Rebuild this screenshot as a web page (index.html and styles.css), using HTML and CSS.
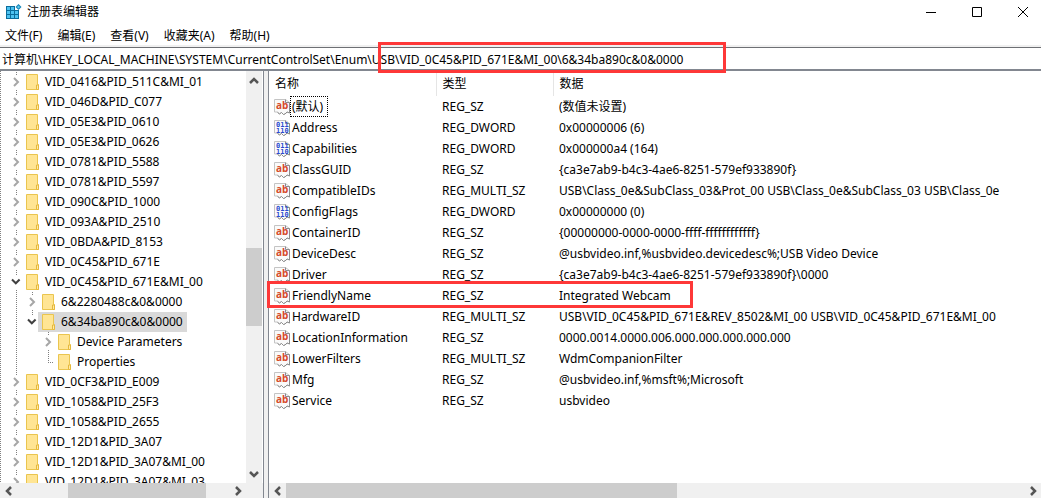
FILE: index.html
```html
<!DOCTYPE html>
<html lang="zh-CN">
<head>
    <meta charset="utf-8">
    <title>注册表编辑器</title>
    <link rel="stylesheet" href="styles.css">
</head>
<body>
    <svg class="symbols" aria-hidden="true">
        <symbol id="right" viewBox="0 0 14 14"><path d="M6 3l4 4-4 4" fill="none" stroke="#a6a6a6" stroke-width="2"/></symbol>
        <symbol id="down" viewBox="0 0 14 14"><path d="M4 4.500l3.800 3.800 3.800-3.800" fill="none" stroke="#404040" stroke-width="2"/></symbol>
        <symbol id="folder" viewBox="0 0 13 16">
            <path d="M.5.5h11v10h1v5H.5z" fill="#ffe594" stroke="#eac54f"/>
            <path d="M10.500 15.500v-4.500h2v4.500z" fill="#ffeaa6" stroke="#e6b93c"/>
        </symbol>
        <symbol id="page" viewBox="0 0 16 16">
            <path d="M.5.5h11l4 3v10.500l-2-1-2 1.500-2 1-2-2-2 1-2-1.500H.5z" fill="#fafafa" stroke="#c4c4c4"/>
            <path d="M11.500.500v3h4v10.500l-2.500-1-2 2-1.500.500-2-2-2 1.500-2-1.500" fill="none" stroke="#8c8c8c"/>
        </symbol>
        <symbol id="arrow" viewBox="0 0 16 16"><path d="M6 4l4 4-4 4" fill="none" stroke="#555" stroke-width="2.500"/></symbol>
    </svg>

    <div class="window">
        <header class="titlebar">
            <svg class="app-icon" viewBox="0 0 16 16" aria-hidden="true">
                <path d="M0 2h10v4h3v9H0z" fill="#0b6d9c"/>
                <path d="M1 3h3v3H1zM5 3h3v3H5zM1 7h3v3H1zM5 7h3v3H5zM9 7h3v3H9zM1 11h3v3H1zM5 11h3v3H5zM9 11h3v3H9z" fill="#4cc2f1"/>
                <path d="M9 1h4v5H9z" fill="#fff"/>
                <path d="M12.500 0L15.500 3l-3 3-3-3z" fill="#1686b8"/>
                <path d="M12.500 1.500L14 3l-1.500 1.500L11 3z" fill="#62c9ee"/>
            </svg>
            <h1>注册表编辑器</h1>
            <div class="controls">
                <button aria-label="最小化"><svg viewBox="0 0 10 10"><path d="M0 5.500h10"/></svg></button>
                <button aria-label="最大化"><svg viewBox="0 0 10 10"><path d="M.5.5h9v9h-9z"/></svg></button>
                <button aria-label="关闭"><svg viewBox="0 0 10 10"><path d="M0 0l10 10M10 0L0 10"/></svg></button>
            </div>
        </header>

        <nav class="menu">
            <button>文件(F)</button>
            <button>编辑(E)</button>
            <button>查看(V)</button>
            <button>收藏夹(A)</button>
            <button>帮助(H)</button>
        </nav>

        <div class="address">
            <input type="text" aria-label="路径" value="计算机\HKEY_LOCAL_MACHINE\SYSTEM\CurrentControlSet\Enum\USB\VID_0C45&amp;PID_671E&amp;MI_00\6&amp;34ba890c&amp;0&amp;0000">
            <div class="mark mark-path"></div>
        </div>

        <main class="panes">
            <section class="pane tree-pane">
                <div class="view">
                    <ul class="tree">
                        <li><div class="row"><svg class="toggle"><use href="#right"/></svg><span class="key"><svg class="folder"><use href="#folder"/></svg>VID_0416&amp;PID_511C&amp;MI_01</span></div></li>
                        <li><div class="row"><svg class="toggle"><use href="#right"/></svg><span class="key"><svg class="folder"><use href="#folder"/></svg>VID_046D&amp;PID_C077</span></div></li>
                        <li><div class="row"><svg class="toggle"><use href="#right"/></svg><span class="key"><svg class="folder"><use href="#folder"/></svg>VID_05E3&amp;PID_0610</span></div></li>
                        <li><div class="row"><svg class="toggle"><use href="#right"/></svg><span class="key"><svg class="folder"><use href="#folder"/></svg>VID_05E3&amp;PID_0626</span></div></li>
                        <li><div class="row"><svg class="toggle"><use href="#right"/></svg><span class="key"><svg class="folder"><use href="#folder"/></svg>VID_0781&amp;PID_5588</span></div></li>
                        <li><div class="row"><svg class="toggle"><use href="#right"/></svg><span class="key"><svg class="folder"><use href="#folder"/></svg>VID_0781&amp;PID_5597</span></div></li>
                        <li><div class="row"><svg class="toggle"><use href="#right"/></svg><span class="key"><svg class="folder"><use href="#folder"/></svg>VID_090C&amp;PID_1000</span></div></li>
                        <li><div class="row"><svg class="toggle"><use href="#right"/></svg><span class="key"><svg class="folder"><use href="#folder"/></svg>VID_093A&amp;PID_2510</span></div></li>
                        <li><div class="row"><svg class="toggle"><use href="#right"/></svg><span class="key"><svg class="folder"><use href="#folder"/></svg>VID_0BDA&amp;PID_8153</span></div></li>
                        <li><div class="row"><svg class="toggle"><use href="#right"/></svg><span class="key"><svg class="folder"><use href="#folder"/></svg>VID_0C45&amp;PID_671E</span></div></li>
                        <li>
                            <div class="row"><svg class="toggle"><use href="#down"/></svg><span class="key"><svg class="folder"><use href="#folder"/></svg>VID_0C45&amp;PID_671E&amp;MI_00</span></div>
                            <ul>
                                <li><div class="row"><svg class="toggle"><use href="#right"/></svg><span class="key"><svg class="folder"><use href="#folder"/></svg>6&amp;2280488c&amp;0&amp;0000</span></div></li>
                                <li>
                                    <div class="row"><svg class="toggle"><use href="#down"/></svg><span class="key selected"><svg class="folder"><use href="#folder"/></svg>6&amp;34ba890c&amp;0&amp;0000</span></div>
                                    <ul>
                                        <li><div class="row"><svg class="toggle"><use href="#right"/></svg><span class="key"><svg class="folder"><use href="#folder"/></svg>Device Parameters</span></div></li>
                                        <li><div class="row"><span class="leaf"></span><span class="key"><svg class="folder"><use href="#folder"/></svg>Properties</span></div></li>
                                    </ul>
                                </li>
                            </ul>
                        </li>
                        <li><div class="row"><svg class="toggle"><use href="#right"/></svg><span class="key"><svg class="folder"><use href="#folder"/></svg>VID_0CF3&amp;PID_E009</span></div></li>
                        <li><div class="row"><svg class="toggle"><use href="#right"/></svg><span class="key"><svg class="folder"><use href="#folder"/></svg>VID_1058&amp;PID_25F3</span></div></li>
                        <li><div class="row"><svg class="toggle"><use href="#right"/></svg><span class="key"><svg class="folder"><use href="#folder"/></svg>VID_1058&amp;PID_2655</span></div></li>
                        <li><div class="row"><svg class="toggle"><use href="#right"/></svg><span class="key"><svg class="folder"><use href="#folder"/></svg>VID_12D1&amp;PID_3A07</span></div></li>
                        <li><div class="row"><svg class="toggle"><use href="#right"/></svg><span class="key"><svg class="folder"><use href="#folder"/></svg>VID_12D1&amp;PID_3A07&amp;MI_00</span></div></li>
                        <li><div class="row"><svg class="toggle"><use href="#right"/></svg><span class="key"><svg class="folder"><use href="#folder"/></svg>VID_12D1&amp;PID_3A07&amp;MI_03</span></div></li>
                    </ul>
                    <div class="scroll vertical">
                        <button aria-label="向上"><svg class="up"><use href="#arrow"/></svg></button>
                        <div class="track"><div class="thumb"></div></div>
                        <button aria-label="向下"><svg class="down"><use href="#arrow"/></svg></button>
                    </div>
                </div>
                <div class="scroll tree-scroll">
                    <button aria-label="向左"><svg class="left"><use href="#arrow"/></svg></button>
                    <div class="track"><div class="thumb"></div></div>
                    <button aria-label="向右"><svg><use href="#arrow"/></svg></button>
                </div>
            </section>

            <section class="pane values-pane">
                <div class="view">
                    <table class="values">
                        <thead>
                            <tr><th class="col-name">名称</th><th class="col-type">类型</th><th>数据</th></tr>
                        </thead>
                        <tbody>
                            <tr><td><svg class="icon"><use href="#page"/><text x="2" y="10" class="glyph-ab">ab</text></svg><span class="name focused">(默认)</span></td><td>REG_SZ</td><td>(数值未设置)</td></tr>
                            <tr><td><svg class="icon"><use href="#page"/><text x="2" y="7" class="glyph-bits">011</text><text x="2" y="13" class="glyph-bits">110</text></svg><span class="name">Address</span></td><td>REG_DWORD</td><td>0x00000006 (6)</td></tr>
                            <tr><td><svg class="icon"><use href="#page"/><text x="2" y="7" class="glyph-bits">011</text><text x="2" y="13" class="glyph-bits">110</text></svg><span class="name">Capabilities</span></td><td>REG_DWORD</td><td>0x000000a4 (164)</td></tr>
                            <tr><td><svg class="icon"><use href="#page"/><text x="2" y="10" class="glyph-ab">ab</text></svg><span class="name">ClassGUID</span></td><td>REG_SZ</td><td>{ca3e7ab9-b4c3-4ae6-8251-579ef933890f}</td></tr>
                            <tr><td><svg class="icon"><use href="#page"/><text x="2" y="10" class="glyph-ab">ab</text></svg><span class="name">CompatibleIDs</span></td><td>REG_MULTI_SZ</td><td>USB\Class_0e&amp;SubClass_03&amp;Prot_00 USB\Class_0e&amp;SubClass_03 USB\Class_0e</td></tr>
                            <tr><td><svg class="icon"><use href="#page"/><text x="2" y="7" class="glyph-bits">011</text><text x="2" y="13" class="glyph-bits">110</text></svg><span class="name">ConfigFlags</span></td><td>REG_DWORD</td><td>0x00000000 (0)</td></tr>
                            <tr><td><svg class="icon"><use href="#page"/><text x="2" y="10" class="glyph-ab">ab</text></svg><span class="name">ContainerID</span></td><td>REG_SZ</td><td>{00000000-0000-0000-ffff-ffffffffffff}</td></tr>
                            <tr><td><svg class="icon"><use href="#page"/><text x="2" y="10" class="glyph-ab">ab</text></svg><span class="name">DeviceDesc</span></td><td>REG_SZ</td><td>@usbvideo.inf,%usbvideo.devicedesc%;USB Video Device</td></tr>
                            <tr><td><svg class="icon"><use href="#page"/><text x="2" y="10" class="glyph-ab">ab</text></svg><span class="name">Driver</span></td><td>REG_SZ</td><td>{ca3e7ab9-b4c3-4ae6-8251-579ef933890f}\0000</td></tr>
                            <tr class="marked"><td><svg class="icon"><use href="#page"/><text x="2" y="10" class="glyph-ab">ab</text></svg><span class="name">FriendlyName</span><div class="mark mark-row"></div></td><td>REG_SZ</td><td>Integrated Webcam</td></tr>
                            <tr><td><svg class="icon"><use href="#page"/><text x="2" y="10" class="glyph-ab">ab</text></svg><span class="name">HardwareID</span></td><td>REG_MULTI_SZ</td><td>USB\VID_0C45&amp;PID_671E&amp;REV_8502&amp;MI_00 USB\VID_0C45&amp;PID_671E&amp;MI_00</td></tr>
                            <tr><td><svg class="icon"><use href="#page"/><text x="2" y="10" class="glyph-ab">ab</text></svg><span class="name">LocationInformation</span></td><td>REG_SZ</td><td>0000.0014.0000.006.000.000.000.000.000</td></tr>
                            <tr><td><svg class="icon"><use href="#page"/><text x="2" y="10" class="glyph-ab">ab</text></svg><span class="name">LowerFilters</span></td><td>REG_MULTI_SZ</td><td>WdmCompanionFilter</td></tr>
                            <tr><td><svg class="icon"><use href="#page"/><text x="2" y="10" class="glyph-ab">ab</text></svg><span class="name">Mfg</span></td><td>REG_SZ</td><td>@usbvideo.inf,%msft%;Microsoft</td></tr>
                            <tr><td><svg class="icon"><use href="#page"/><text x="2" y="10" class="glyph-ab">ab</text></svg><span class="name">Service</span></td><td>REG_SZ</td><td>usbvideo</td></tr>
                        </tbody>
                    </table>
                </div>
                <div class="scroll values-scroll">
                    <button aria-label="向左"><svg class="left"><use href="#arrow"/></svg></button>
                    <div class="track"><div class="thumb"></div></div>
                    <button aria-label="向右"><svg><use href="#arrow"/></svg></button>
                </div>
            </section>
        </main>
    </div>
</body>
</html>
```
FILE: styles.css
```css
* {
    box-sizing: border-box;
}

body {
    margin: 0;
    font-family: "Noto Sans", "Noto Sans CJK SC", sans-serif;
    font-size: 12px;
    line-height: 20px;
    color: #000;
    background: #fff;
}

button,
input {
    font: inherit;
    color: inherit;
    border: none;
    padding: 0;
    margin: 0;
    background: none;
}

svg {
    display: block;
    flex: none;
}

ul {
    list-style: none;
    margin: 0;
    padding: 0;
}

.symbols {
    position: absolute;
    width: 0;
    height: 0;
}

.window {
    display: flex;
    flex-direction: column;
    height: 100vh;
    overflow: hidden;
}

/* title bar and menu */
.titlebar {
    display: flex;
    align-items: center;
    flex: none;
    height: 24px;
    padding-left: 6px;
    gap: 5px;
}

.app-icon {
    width: 16px;
    height: 16px;
}

.titlebar h1 {
    margin: 0;
    font-size: 12px;
    font-weight: normal;
}

.controls {
    display: flex;
    gap: 10px;
    margin-left: auto;
}

.controls button {
    display: flex;
    align-items: center;
    justify-content: center;
    width: 36px;
    height: 24px;
}

.controls svg {
    width: 10px;
    height: 10px;
    fill: none;
    stroke: #000;
}

.menu {
    display: flex;
    flex: none;
    gap: 15px;
    height: 23px;
    padding: 2px 5px 0;
    border-bottom: 2px solid #f0f0f0;
}

/* address bar */
.address {
    position: relative;
    flex: none;
    height: 24px;
    border-top: 1px solid #6e7074;
    border-bottom: 2px solid #828790;
}

.address input {
    display: block;
    width: 100%;
    height: 21px;
    padding-left: 2px;
    outline: none;
}

/* red frames */
.mark {
    position: absolute;
    border: 3px solid #fe3838;
    pointer-events: none;
    z-index: 1;
}

.mark-path {
    left: 378px;
    top: -6px;
    width: 348px;
    height: 31px;
}

.mark-row {
    left: -2px;
    top: -4px;
    width: 426px;
    height: 27px;
}

/* panes */
.panes {
    display: grid;
    grid-template-columns: 264px 1fr;
    gap: 4px;
    flex: 1;
    min-height: 0;
    background: #f0f0f0;
}

.pane {
    display: flex;
    flex-direction: column;
    min-width: 0;
    min-height: 0;
    background: #fff;
}

.tree-pane {
    border-right: 1px solid #828790;
}

.values-pane {
    border-left: 1px solid #828790;
}

.view {
    display: flex;
    flex: 1;
    min-height: 0;
}

.tree-pane .view {
    overflow: hidden;
    padding-right: 1px;
}

/* tree */
.tree {
    flex: 1;
    min-width: 0;
    height: 100%;
    padding-top: 1px;
    overflow: hidden;
    background: repeating-linear-gradient(#808080 0 1px, transparent 1px 2px) 0 0 / 1px 100% no-repeat;
}

.tree li {
    background: repeating-linear-gradient(#808080 0 1px, transparent 1px 2px) 16px 0 / 1px 100% no-repeat;
}

.tree li li:last-child {
    background-size: 1px 10px;
}

.tree li ul {
    padding-left: 16px;
}

.row {
    display: flex;
    align-items: center;
    height: 20px;
    padding-left: 8px;
}

.toggle {
    width: 14px;
    height: 14px;
    background: #fff;
}

.leaf {
    width: 14px;
    height: 1px;
    background: repeating-linear-gradient(90deg, #808080 0 1px, transparent 1px 2px) 8px 0 / 6px 1px no-repeat;
}

.key {
    display: flex;
    align-items: center;
    gap: 6px;
    padding: 0 4px;
    white-space: nowrap;
}

.key.selected {
    background: #d9d9d9;
}

.folder {
    width: 13px;
    height: 16px;
}

/* values */
.values {
    width: 100%;
    table-layout: fixed;
    border-collapse: collapse;
    align-self: flex-start;
}

.values th {
    height: 25px;
    padding: 0 6px;
    border-right: 1px solid #e5e5e5;
    font-weight: normal;
    text-align: left;
}

.values th:last-child {
    border-right: none;
}

.col-name {
    width: 167px;
}

.col-type {
    width: 117px;
}

.values td {
    height: 21px;
    padding: 0 6px;
    white-space: nowrap;
}

.values td:first-child {
    display: flex;
    align-items: center;
    padding: 0 5px;
}

.marked td:first-child {
    position: relative;
}

.icon {
    width: 16px;
    height: 16px;
}

.name {
    padding: 0 2px;
    line-height: 19px;
    border: 1px solid transparent;
    border-left: none;
}

.name.focused {
    padding: 0 4px 0 1px;
    border: 1px dotted #000;
}

.glyph-ab {
    font: bold 10px "Open Sans", sans-serif;
    fill: #d64a2b;
}

.glyph-bits {
    font: bold 7px "DejaVu Sans Mono", monospace;
    fill: #2a4bd0;
}

/* scroll bars */
.scroll {
    display: flex;
    flex: none;
    height: 15px;
    background: #f0f0f0;
}

.scroll button {
    display: flex;
    align-items: center;
    justify-content: center;
    width: 17px;
    height: 15px;
}

.scroll svg {
    width: 16px;
    height: 16px;
}

.scroll .left {
    transform: rotate(180deg);
}

.scroll .up {
    transform: rotate(-90deg);
}

.scroll .down {
    transform: rotate(90deg);
}

.track {
    flex: 1;
}

.thumb {
    height: 100%;
    background: #cdcdcd;
}

.vertical {
    flex-direction: column;
    width: 16px;
    height: 100%;
}

.vertical button {
    width: 16px;
    height: 19px;
}

.vertical .track {
    display: flex;
    flex-direction: column;
}

.vertical .track::before {
    content: "";
    flex: 158;
}

.vertical .track::after {
    content: "";
    flex: 138;
}

.vertical .thumb {
    flex: 78;
}

.tree-scroll {
    padding-right: 17px;
}

.tree-scroll .thumb {
    width: 65%;
    margin-left: 24%;
}

.values-scroll .thumb {
    width: 53%;
}
```
